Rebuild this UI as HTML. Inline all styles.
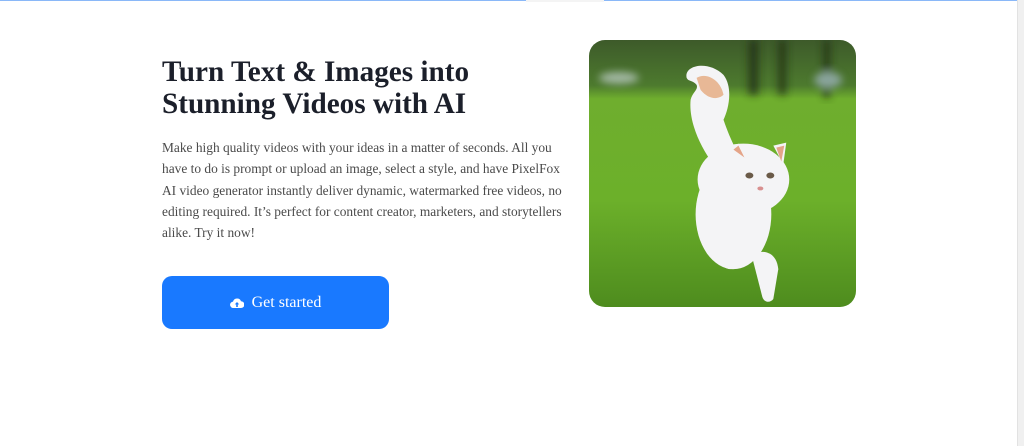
<!DOCTYPE html>
<html><head><style>
html,body{margin:0;padding:0;background:#fff;width:1024px;height:446px;overflow:hidden;position:relative;font-family:"Liberation Serif",serif}
.bar{position:absolute;top:0;left:0;width:1018px;height:1px;background:#8ab8f8}
.gap{position:absolute;top:0;left:526px;width:78px;height:2px;background:#f4f4f4}
.sb{position:absolute;top:0;right:0;width:6px;height:446px;background:#f0f0f0;border-left:1px solid #e2e2e2}
h1{position:absolute;left:162px;top:56px;margin:0;font-size:29.2px;line-height:32px;font-weight:bold;color:#1b1f2a;width:400px}
p{position:absolute;left:162px;top:137px;margin:0;width:402px;font-size:13.4px;line-height:21.3px;color:#4a4a4a}
.btn{position:absolute;left:162px;top:276px;width:227px;height:53px;background:#1979ff;border-radius:10px;color:#fff;font-size:16px;display:flex;align-items:center;justify-content:center;gap:8px}
.img{position:absolute;left:589px;top:40px;width:267px;height:267px;border-radius:16px;overflow:hidden}
</style></head><body>
<div class="bar"></div><div class="gap"></div><div class="sb"></div>
<h1>Turn Text &amp; Images into Stunning Videos with AI</h1>
<p>Make high quality videos with your ideas in a matter of seconds. All you have to do is prompt or upload an image, select a style, and have PixelFox AI video generator instantly deliver dynamic, watermarked free videos, no editing required. It’s perfect for content creator, marketers, and storytellers alike. Try it now!</p>
<div class="btn"><svg width="14" height="12" viewBox="0 0 14 12"><path d="M3.5 11 A3.2 3.2 0 0 1 3 4.6 A4.2 4.2 0 0 1 11 4.2 A3.4 3.4 0 0 1 11 11 Z" fill="#fff"/><path d="M7 5 L4.8 7.4 H6.2 V10 H7.8 V7.4 H9.2 Z" fill="#1979ff"/></svg><span>Get started</span></div>
<div class="img"><svg width="267" height="267" viewBox="0 0 268 268">
<defs>
<linearGradient id="g" x1="0" y1="0" x2="0" y2="1"><stop offset="0" stop-color="#3d5a2a"/><stop offset="0.17" stop-color="#4d7a2e"/><stop offset="0.22" stop-color="#6fae2e"/><stop offset="0.6" stop-color="#6cb02a"/><stop offset="1" stop-color="#4e8c1e"/></linearGradient>
<filter id="b"><feGaussianBlur stdDeviation="4"/></filter>
</defs>
<rect width="268" height="268" fill="url(#g)"/>
<g filter="url(#b)" opacity="0.8"><rect x="160" y="0" width="10" height="55" fill="#243018"/><rect x="190" y="0" width="8" height="55" fill="#243018"/><rect x="235" y="0" width="7" height="58" fill="#243018"/><ellipse cx="30" cy="38" rx="20" ry="6" fill="#b8c8c0"/><ellipse cx="240" cy="40" rx="14" ry="8" fill="#9ab0b8"/></g>
<g fill="#f4f4f6">
<path d="M98 38 C95 25 120 20 135 35 C145 48 140 70 135 80 C140 95 145 105 150 115 L125 125 C110 105 100 80 102 60 C104 52 110 50 108 45 C104 40 100 42 98 38 Z"/>
<ellipse cx="145" cy="175" rx="38" ry="55"/>
<ellipse cx="155" cy="140" rx="46" ry="36"/>
<path d="M142 110 L150 104 L158 118 Z"/><path d="M185 106 L198 103 L195 125 Z"/>
<rect x="132" y="200" width="22" height="30" rx="10"/>
<path d="M163 215 C175 210 188 212 190 230 L185 260 C182 264 176 264 174 258 Z"/>
</g>
<path d="M108 38 C118 32 132 40 135 55 C130 60 120 60 112 50 Z" fill="#e8b896"/>
<path d="M145 110 L150 106 L156 118 Z" fill="#e4a488"/><path d="M188 108 L196 106 L193 122 Z" fill="#e4a488"/>
<ellipse cx="161" cy="136" rx="4" ry="3" fill="#6a5a48"/><ellipse cx="182" cy="136" rx="4" ry="3" fill="#6a5a48"/>
<ellipse cx="172" cy="149" rx="3" ry="2" fill="#d89090"/>
</svg></div>
</body></html>
